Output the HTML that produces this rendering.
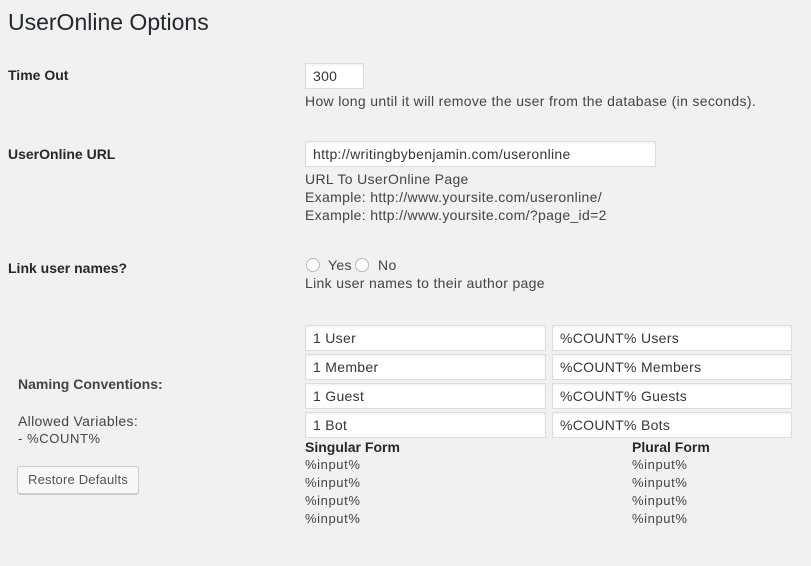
<!DOCTYPE html>
<html><head><style>
body{margin:0;width:811px;height:566px;background:#f1f1f1;font-family:"Liberation Sans",sans-serif;color:#444;font-size:14px;position:relative;overflow:hidden}
.a{position:absolute;white-space:nowrap;line-height:18px;letter-spacing:.33px}
.b{font-weight:bold;color:#23282d;letter-spacing:0}
.i{position:absolute;box-sizing:border-box;background:#fff;border:1px solid #ddd;box-shadow:inset 0 1px 2px rgba(0,0,0,.07);color:#32373c;font-size:14px;padding-left:7px;line-height:24px;height:26px;letter-spacing:.3px}
.r{position:absolute;width:14px;height:14px;border:1px solid #b4b9be;border-radius:50%;background:#fff;box-sizing:border-box}
.s{font-size:13px;letter-spacing:.6px}
</style></head><body>
<div class="a" style="left:8px;top:8px;font-size:23px;line-height:28px;color:#23282d;letter-spacing:0">UserOnline Options</div>

<div class="a b" style="left:8px;top:66px">Time Out</div>
<div class="i" style="left:305px;top:63px;width:59px">300</div>
<div class="a" style="left:305px;top:92px">How long until it will remove the user from the database (in seconds).</div>

<div class="a b" style="left:8px;top:145px">UserOnline URL</div>
<div class="i" style="left:305px;top:141px;width:351px">http://writingbybenjamin.com/useronline</div>
<div class="a" style="left:305px;top:170px">URL To UserOnline Page</div>
<div class="a" style="left:305px;top:188px">Example: http://www.yoursite.com/useronline/</div>
<div class="a" style="left:305px;top:206px">Example: http://www.yoursite.com/?page_id=2</div>

<div class="a b" style="left:8px;top:259px">Link user names?</div>
<div class="r" style="left:306px;top:258px"></div>
<div class="a" style="left:328px;top:256px">Yes</div>
<div class="r" style="left:355px;top:258px"></div>
<div class="a" style="left:378px;top:256px">No</div>
<div class="a" style="left:305px;top:274px">Link user names to their author page</div>

<div class="i" style="left:305px;top:325px;width:241px">1 User</div>
<div class="i" style="left:552px;top:325px;width:240px">%COUNT% Users</div>
<div class="i" style="left:305px;top:354px;width:241px">1 Member</div>
<div class="i" style="left:552px;top:354px;width:240px">%COUNT% Members</div>
<div class="i" style="left:305px;top:383px;width:241px">1 Guest</div>
<div class="i" style="left:552px;top:383px;width:240px">%COUNT% Guests</div>
<div class="i" style="left:305px;top:412px;width:241px">1 Bot</div>
<div class="i" style="left:552px;top:412px;width:240px">%COUNT% Bots</div>

<div class="a b" style="left:18px;top:375px;color:#444">Naming Conventions:</div>
<div class="a" style="left:18px;top:412px">Allowed Variables:</div>
<div class="a s" style="left:18px;top:430px">- %COUNT%</div>
<div style="position:absolute;left:17px;top:466px;width:122px;height:28px;box-sizing:border-box;border:1px solid #ccc;border-radius:3px;background:#f7f7f7;box-shadow:0 1px 0 #ccc;font-size:13px;line-height:26px;text-align:center;color:#555;letter-spacing:.2px">Restore Defaults</div>

<div class="a b" style="left:305px;top:438px">Singular Form</div>
<div class="a b" style="left:632px;top:438px">Plural Form</div>
<div class="a s" style="left:305px;top:456px">%input%</div>
<div class="a s" style="left:305px;top:474px">%input%</div>
<div class="a s" style="left:305px;top:492px">%input%</div>
<div class="a s" style="left:305px;top:510px">%input%</div>
<div class="a s" style="left:632px;top:456px">%input%</div>
<div class="a s" style="left:632px;top:474px">%input%</div>
<div class="a s" style="left:632px;top:492px">%input%</div>
<div class="a s" style="left:632px;top:510px">%input%</div>
</body></html>
